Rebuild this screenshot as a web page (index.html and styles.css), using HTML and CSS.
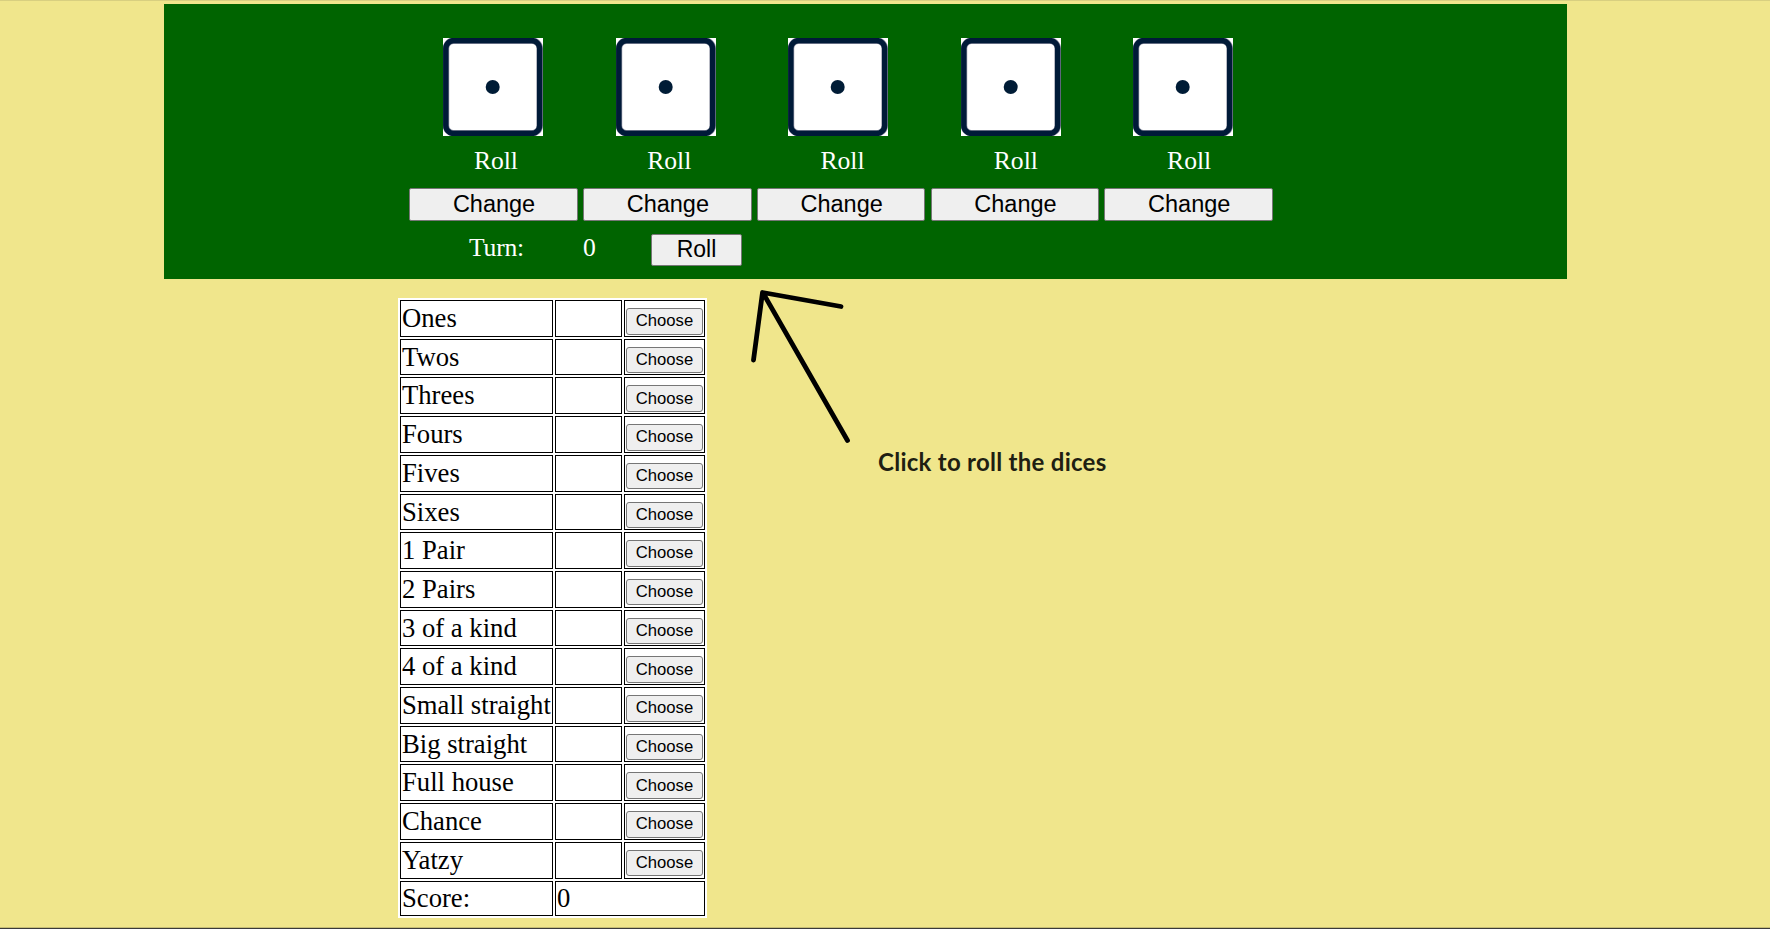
FILE: index.html
```html
<!DOCTYPE html>
<html lang="en">
<head>
<meta charset="utf-8">
<title>Yatzy</title>
<link rel="stylesheet" href="styles.css">
</head>
<body>
<main class="page">
<section class="board">
<div class="dice" id="dice"></div>
<div class="labels" id="labels"></div>
<div class="changes" id="changes"></div>
<div class="turn"><span class="turn-label">Turn:</span><span class="turn-count">0</span><button class="roll">Roll</button></div>
</section>
<div class="scores" id="scores"></div>
</main>
<svg class="arrow" width="100" height="160" viewBox="0 0 100 160"><path d="M91 20.5 12.5 6.5 3.5 74M13 7 97.5 154.5"/></svg>
<div class="hint">Click to roll the dices</div>
<script src="app.js"></script>
</body>
</html>
```
FILE: app.js
```js
const die = '<svg class="die" viewBox="0 0 100 98"><rect width="100" height="98" fill="#fff"/><rect x="3" y="2.7" width="93.8" height="92.6" rx="7.5" fill="#fff" stroke="#85889b" stroke-width="6.4"/><rect x="2.8" y="2.5" width="93.8" height="93" rx="8" fill="none" stroke="#001a38" stroke-width="5.4"/><circle cx="49.7" cy="49" r="7" fill="#001c36"/></svg>';
document.getElementById('dice').innerHTML = die.repeat(5);
document.getElementById('labels').innerHTML = '<span>Roll</span>'.repeat(5);
document.getElementById('changes').innerHTML = '<button>Change</button>'.repeat(5);
const names = ['Ones', 'Twos', 'Threes', 'Fours', 'Fives', 'Sixes', '1 Pair', '2 Pairs', '3 of a kind', '4 of a kind', 'Small straight', 'Big straight', 'Full house', 'Chance', 'Yatzy'];
document.getElementById('scores').innerHTML = names.map(n =>
  `<div class="cell name">${n}</div><div class="cell"></div><div class="cell pick"><button>Choose</button></div>`).join('') +
  '<div class="cell">Score:</div><div class="cell total">0</div>';
```
FILE: styles.css
```css
* { box-sizing: border-box; }
html, body { margin: 0; height: 929px; overflow: hidden; }
body {
  background: #f0e68c;
  border-top: 1px solid #d8cf80;
  border-bottom: 1px solid #3a3a3a;
  box-shadow: inset 0 -1px #c5bd75;
  font-family: "Liberation Serif", "Times New Roman", serif;
}
.page { padding: 3px 0 0 164px; }
.board { width: 1403px; height: 275px; background: #006400; color: #fff; padding-top: 34px; }
.dice { display: flex; gap: 72.6px; padding-left: 279px; }
.die { width: 100px; height: 98px; flex: none; }
.labels { display: flex; padding-left: 245.5px; margin-top: 10px; font-size: 25.6px; line-height: 30px; }
.labels span { width: 173.3px; padding-left: 64.4px; }
.changes { display: flex; gap: 5.3px; padding-left: 245.3px; margin-top: 12px; }
button {
  font-family: "Liberation Sans", Arial, sans-serif;
  color: #000;
  background: #efefef;
  border: 1px solid #767676;
  border-radius: 2px;
  padding: 0;
}
.changes button { width: 168.5px; height: 33px; font-size: 23.5px; line-height: 30px; padding: 0 0 2px 1px; }
.turn { display: flex; padding-left: 305px; margin-top: 13px; font-size: 25.6px; line-height: 30px; }
.turn-label { width: 114px; margin-top: -1px; letter-spacing: -0.2px; }
.turn-count { width: 68px; margin-top: -1px; }
.roll { width: 91px; height: 32px; font-size: 23px; line-height: 29px; padding-bottom: 1px; }
.scores {
  display: grid;
  grid-template-columns: 153px 67px 81px;
  grid-template-rows: repeat(15, 36.71px) 35px;
  gap: 2px;
  width: 309px;
  height: 620px;
  margin: 19px 0 0 234px;
  padding: 2px;
  background: #fff;
}
.cell { border: 1px solid #000; padding: 1px; font-size: 26.67px; line-height: 31px; white-space: nowrap; }
.name { padding-top: 2px; }
.pick { display: flex; padding-top: 7px; }
.pick button { width: 77px; height: 26.5px; font-size: 16.67px; line-height: 24px; border-radius: 3px; }
.total { grid-column: span 2; }
.arrow { position: absolute; left: 750px; top: 286px; overflow: visible; }
.arrow path { fill: none; stroke: #000; stroke-width: 4.8; stroke-linecap: round; stroke-linejoin: round; }
.hint {
  position: absolute;
  left: 878px;
  top: 446px;
  font: bold 24px/32px "Lato", sans-serif;
  letter-spacing: 0.27px;
  color: #201e12;
  white-space: nowrap;
}
```
